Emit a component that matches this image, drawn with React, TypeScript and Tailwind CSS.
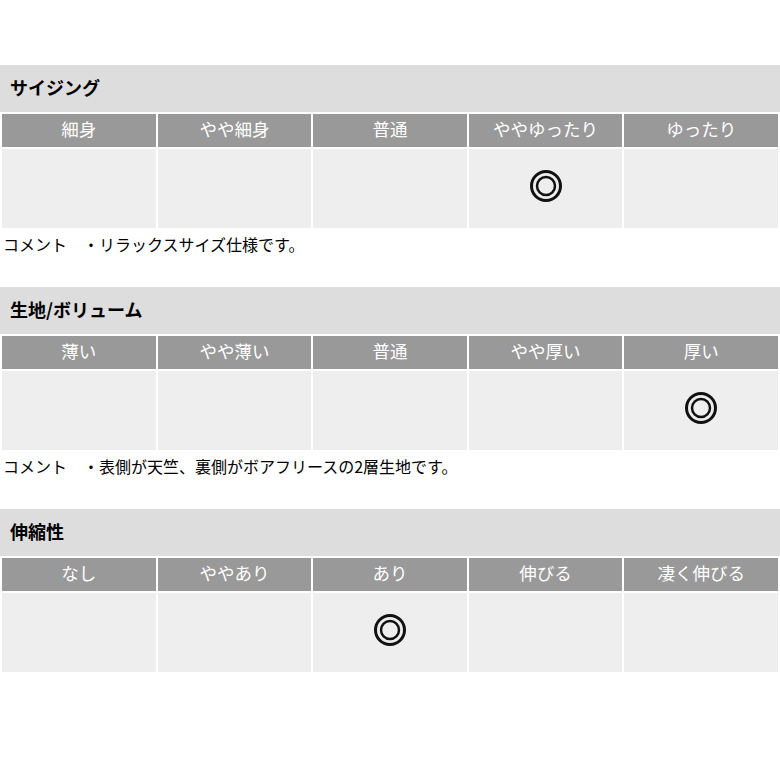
const sections = [
  {
    title: 'サイジング',
    labels: ['細身', 'やや細身', '普通', 'ややゆったり', 'ゆったり'],
    mark: 3,
    comment: '・リラックスサイズ仕様です。',
  },
  {
    title: '生地/ボリューム',
    labels: ['薄い', 'やや薄い', '普通', 'やや厚い', '厚い'],
    mark: 4,
    comment: '・表側が天竺、裏側がボアフリースの2層生地です。',
  },
  {
    title: '伸縮性',
    labels: ['なし', 'ややあり', 'あり', '伸びる', '凄く伸びる'],
    mark: 2,
    comment: '',
  },
];

function DoubleCircle() {
  return (
    <svg width="32" height="32" viewBox="0 0 32 32">
      <circle cx="16" cy="16" r="14.5" fill="none" stroke="#111" strokeWidth="3" />
      <circle cx="16" cy="16" r="9" fill="none" stroke="#111" strokeWidth="2.5" />
    </svg>
  );
}

export default function App() {
  return (
    <div
      className="w-[780px] h-[780px] bg-white pt-[65px]"
      style={{ fontFamily: '"Noto Sans CJK JP", "Noto Sans", sans-serif' }}
    >
      {sections.map((s) => (
        <div key={s.title} className="h-[222px]">
          <div className="h-[47px] bg-[#dddddd] flex items-center pl-[10px] pb-[2px] text-[18px] font-bold text-black">
            {s.title}
          </div>
          <div className="grid grid-cols-5 gap-[2px] px-[2px] pt-[2px]">
            {s.labels.map((l) => (
              <div
                key={l}
                className="h-[33px] bg-[#999999] text-white text-[17.5px] flex items-center justify-center pb-[3px]"
              >
                {l}
              </div>
            ))}
            {s.labels.map((l, i) => (
              <div key={l + '-v'} className="h-[79px] bg-[#eeeeee] flex items-center justify-center pb-[5px]">
                {i === s.mark && <DoubleCircle />}
              </div>
            ))}
          </div>
          {s.comment && (
            <div className="pl-[3px] pt-[4px] text-[16px] text-black leading-[24px]">
              コメント　{s.comment}
            </div>
          )}
        </div>
      ))}
    </div>
  );
}
